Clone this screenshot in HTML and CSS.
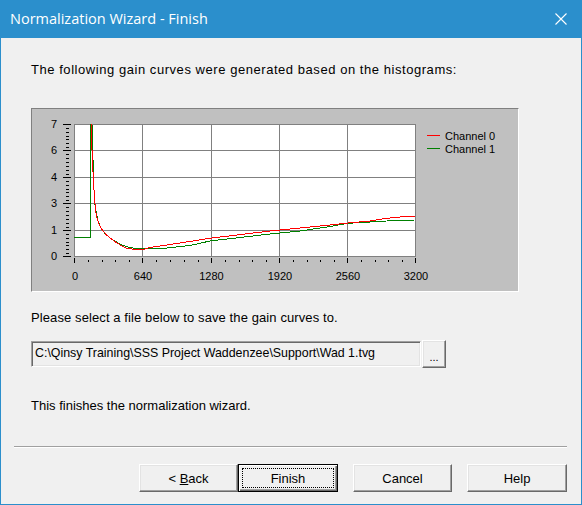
FILE: index.html
```html
<!DOCTYPE html>
<html lang="en">
<head>
  <meta charset="UTF-8">
  <title>Normalization Wizard - Finish</title>
  <link rel="stylesheet" href="styles.css">
</head>
<body>

<div class="window">
  <div class="titlebar">
    <span class="title">Normalization Wizard - Finish</span>
    <svg class="close" width="12" height="12" viewBox="0 0 12 12">
      <path d="M0.5 0.5 L11.5 11.5 M11.5 0.5 L0.5 11.5" stroke="#fff" stroke-width="1.1" fill="none"/>
    </svg>
  </div>

  <div class="content">
    <div class="page">
      <p class="intro">The following gain curves were generated based on the histograms:</p>

      <div class="chartPanel">
        <svg width="486" height="182" viewBox="0 0 486 182">
          <g transform="translate(-32 -109)" font-family="Liberation Sans, Arial, sans-serif" font-size="11" fill="#000">
            <!-- plot area -->
            <rect x="74.5" y="124.5" width="341" height="132" fill="#fff" stroke="#808080"/>
            <g stroke="#808080" shape-rendering="crispEdges">
              <line x1="142.5" y1="124" x2="142.5" y2="256"/>
              <line x1="211.5" y1="124" x2="211.5" y2="256"/>
              <line x1="279.5" y1="124" x2="279.5" y2="256"/>
              <line x1="347.5" y1="124" x2="347.5" y2="256"/>
              <line x1="74" y1="150.5" x2="415" y2="150.5"/>
              <line x1="74" y1="177.5" x2="415" y2="177.5"/>
              <line x1="74" y1="203.5" x2="415" y2="203.5"/>
              <line x1="74" y1="230.5" x2="415" y2="230.5"/>
            </g>

            <!-- y axis ticks -->
            <g stroke="#000" shape-rendering="crispEdges" id="yTicks"></g>
            <!-- x axis ticks -->
            <g stroke="#000" shape-rendering="crispEdges" id="xTicks"></g>

            <g text-anchor="end">
              <text x="57" y="128">7</text>
              <text x="57" y="154">6</text>
              <text x="57" y="181">4</text>
              <text x="57" y="207">3</text>
              <text x="57" y="234">1</text>
              <text x="57" y="260">0</text>
            </g>
            <g text-anchor="middle">
              <text x="75" y="279.5">0</text>
              <text x="143" y="279.5">640</text>
              <text x="211.5" y="279.5">1280</text>
              <text x="280" y="279.5">1920</text>
              <text x="348" y="279.5">2560</text>
              <text x="416" y="279.5">3200</text>
            </g>

            <!-- curves -->
            <polyline fill="none" stroke="#008000" stroke-width="1" shape-rendering="crispEdges"
              points="74,237.5 90,237.5 90,124.5 92,124.5 93,160 94,190 95,205 96.5,214 98,221 100,226 103,231 106,234.5 110,238 116.5,242 122,245 130,247.5 136,248.5 163,248.5 190,245.5 210,241 240,237.5 270,234 300,231 330,226.5 348,223.3 370,222 395,220.5 415,220"/>
            <polyline fill="none" stroke="#ff0000" stroke-width="1" shape-rendering="crispEdges"
              points="91.5,124 92,150 93,172 94.5,198 95.5,210 97,218 99.5,225 102,229.5 106.5,235 112,239.5 117,243 122,246 127,248.5 137,249.5 145,249 150,247.5 180,243 210,238.3 245,234 270,231 300,228 330,225 348,223 370,221 385,218.5 400,217 415,216"/>

            <!-- legend -->
            <line x1="427" y1="135.5" x2="440" y2="135.5" stroke="#ff0000" shape-rendering="crispEdges"/>
            <text x="445" y="139.5">Channel 0</text>
            <line x1="427" y1="148.5" x2="440" y2="148.5" stroke="#008000" shape-rendering="crispEdges"/>
            <text x="445" y="152.5">Channel 1</text>
          </g>
        </svg>
      </div>

      <p class="label">Please select a file below to save the gain curves to.</p>

      <div class="fileRow">
        <div class="fileBox">C:\Qinsy Training\SSS Project Waddenzee\Support\Wad 1.tvg</div>
        <button class="browse">...</button>
      </div>

      <p class="finishText">This finishes the normalization wizard.</p>
    </div>

    <div class="separator"></div>

    <div class="buttons">
      <button class="btn back">&lt; <u>B</u>ack</button>
      <button class="btn default"><span class="focus">Finish</span></button>
      <button class="btn gap cancel">Cancel</button>
      <button class="btn gap">Help</button>
    </div>
  </div>
</div>

<script>
  // axis tick marks
  const svgNS = 'http://www.w3.org/2000/svg';
  const yTicks = document.getElementById('yTicks');
  const xTicks = document.getElementById('xTicks');

  function addLine(parent, x1, y1, x2, y2) {
    const l = document.createElementNS(svgNS, 'line');
    l.setAttribute('x1', x1);
    l.setAttribute('y1', y1);
    l.setAttribute('x2', x2);
    l.setAttribute('y2', y2);
    parent.appendChild(l);
  }

  const yMajor = [124.5, 150.5, 177.5, 203.5, 230.5, 256.5];
  for (let i = 0; i < yMajor.length; i++) {
    addLine(yTicks, 63, yMajor[i], 71, yMajor[i]);
    if (i < yMajor.length - 1) {
      const step = (yMajor[i + 1] - yMajor[i]) / 7;
      for (let k = 1; k < 7; k++) {
        const y = Math.round(yMajor[i] + step * k) + 0.5;
        addLine(yTicks, 66, y, 69, y);
      }
    }
  }

  const xMajor = [74.5, 142.5, 211.5, 279.5, 347.5, 415.5];
  for (let i = 0; i < xMajor.length; i++) {
    addLine(xTicks, xMajor[i], 258, xMajor[i], 263);
    if (i < xMajor.length - 1) {
      const step = (xMajor[i + 1] - xMajor[i]) / 5;
      for (let k = 1; k < 5; k++) {
        const x = Math.round(xMajor[i] + step * k) + 0.5;
        addLine(xTicks, x, 260, x, 262);
      }
    }
  }
</script>

</body>
</html>
```

FILE: styles.css
```css
body {
  margin: 0;
  padding: 0;
  font-family: 'Liberation Sans', Arial, sans-serif;
  font-size: 13px;
  color: #000;
}

.window {
  width: 582px;
  height: 505px;
  box-sizing: border-box;
  border: 1px solid #2b8fcc;
  border-top: none;
  background-color: #f0f0f0;
}

.titlebar {
  height: 38px;
  margin: 0 -1px;
  background-color: #2b8fcc;
  display: flex;
  align-items: center;
  justify-content: space-between;
  padding: 0 15px 0 10px;
}

.title {
  color: #fff;
  font-family: 'Open Sans', 'Noto Sans', sans-serif;
  font-size: 14.5px;
  padding-bottom: 1px;
}

.close {
  display: block;
}

.content {
  padding: 0 14px 0 13px;
}

.page {
  padding-left: 17px;
}

p {
  margin: 0;
  line-height: 15px;
}

.intro {
  margin-top: 24px;
  letter-spacing: 0.55px;
}

.chartPanel {
  margin-top: 31px;
  width: 488px;
  height: 184px;
  box-sizing: border-box;
  border: 1px solid;
  border-color: #808080 #fff #fff #808080;
  background-color: #c0c0c0;
}

.chartPanel svg {
  display: block;
}

.label {
  margin-top: 18px;
  letter-spacing: 0.1px;
}

.fileRow {
  margin-top: 15px;
  display: flex;
  align-items: center;
  height: 28px;
}

.fileBox {
  width: 390px;
  height: 26px;
  box-sizing: border-box;
  border: 1px solid;
  border-color: #a0a0a0 #fff #fff #a0a0a0;
  box-shadow: inset 1px 1px #696969, inset -1px -1px #e3e3e3;
  padding: 4px 0 0 3px;
  line-height: 15px;
  font-size: 12.4px;
  white-space: nowrap;
}

.browse {
  margin-left: 1px;
  width: 24px;
  height: 28px;
  padding: 6px 0 0 0;
  font-family: 'Liberation Sans', Arial, sans-serif;
  font-size: 11px;
  background-color: #f0f0f0;
  border: 1px solid;
  border-color: #fff #696969 #696969 #fff;
  box-shadow: inset -1px -1px #a0a0a0, inset 1px 1px #e3e3e3;
}

.finishText {
  margin-top: 30px;
}

.separator {
  margin-top: 33px;
  height: 1px;
  background-color: #a0a0a0;
  border-bottom: 1px solid #fff;
}

.buttons {
  margin-top: 16px;
  display: flex;
  justify-content: flex-end;
}

.btn {
  width: 100px;
  height: 28px;
  padding: 0;
  font-family: 'Liberation Sans', Arial, sans-serif;
  font-size: 13px;
  color: #000;
  background-color: #f0f0f0;
  border: 1px solid;
  border-color: #fff #696969 #696969 #fff;
  box-shadow: inset -1px -1px #a0a0a0, inset 1px 1px #e3e3e3;
}

.back {
  width: 99px;
}

.gap {
  margin-left: 15px;
}

.cancel {
  width: 99px;
}

.btn.default {
  border: 1px solid #000;
  box-shadow: inset 1px 1px #fff, inset -1px -1px #696969, inset -2px -2px #a0a0a0;
  padding: 3px;
}

.focus {
  display: flex;
  align-items: center;
  justify-content: center;
  height: 100%;
  box-sizing: border-box;
  border: 1px dotted #000;
}
```
